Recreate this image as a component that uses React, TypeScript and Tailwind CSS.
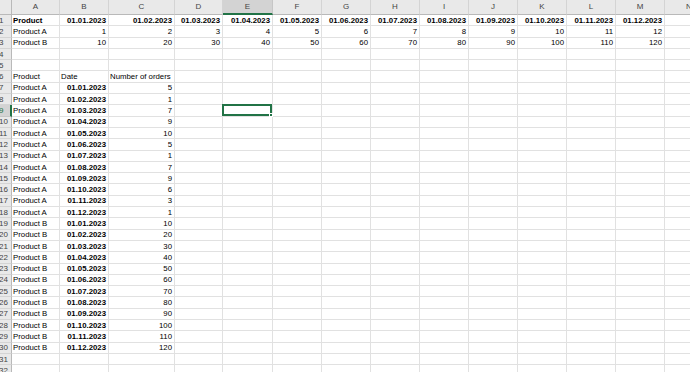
const cols = ['A', 'B', 'C', 'D', 'E', 'F', 'G', 'H', 'I', 'J', 'K', 'L', 'M', 'N'];

const months = ['01', '02', '03', '04', '05', '06', '07', '08', '09', '10', '11', '12'];
const dates = months.map((m) => `01.${m}.2023`);
const ordersA = [5, 1, 7, 9, 10, 5, 1, 7, 9, 6, 3, 1];

type Cell = { v: string; bold?: boolean; right?: boolean };
type Row = Record<string, Cell>;

function buildRows(): Row[] {
  const rows: Row[] = [];
  const r1: Row = { A: { v: 'Product', bold: true } };
  const r2: Row = { A: { v: 'Product A' } };
  const r3: Row = { A: { v: 'Product B' } };
  dates.forEach((d, i) => {
    const c = cols[i + 1];
    r1[c] = { v: d, bold: true, right: true };
    r2[c] = { v: String(i + 1), right: true };
    r3[c] = { v: String((i + 1) * 10), right: true };
  });
  rows.push(r1, r2, r3, {}, {});
  rows.push({ A: { v: 'Product' }, B: { v: 'Date' }, C: { v: 'Number of orders' } });
  dates.forEach((d, i) => {
    rows.push({
      A: { v: 'Product A' },
      B: { v: d, bold: true, right: true },
      C: { v: String(ordersA[i]), right: true },
    });
  });
  dates.forEach((d, i) => {
    rows.push({
      A: { v: 'Product B' },
      B: { v: d, bold: true, right: true },
      C: { v: String((i + 1) * 10), right: true },
    });
  });
  rows.push({}, {});
  return rows;
}

const rows = buildRows();
const SEL_COL = 'E';
const SEL_ROW = 9;

export default function App() {
  return (
    <div
      className="w-[690px] h-[372px] overflow-hidden bg-white text-black"
      style={{ fontFamily: '"Liberation Sans", Arial, sans-serif' }}
    >
      <div className="grid grid-cols-[12px_48px_49px_66px_48px_50px_repeat(8,49px)_49px] grid-rows-[15px_repeat(32,11.3px)] w-[715px]">
        {/* corner */}
        <div className="bg-[#e9e9e9] border-r border-b border-[#b9b9b9]" />
        {/* column headers */}
        {cols.map((c) => (
          <div
            key={c}
            className={
              c === SEL_COL
                ? 'flex items-center justify-center bg-[#d3d3d3] border-r border-[#c6c6c6] border-b-2 border-b-[#217346] text-[8px] text-[#444]'
                : 'flex items-center justify-center bg-[#e9e9e9] border-r border-[#d4d4d4] border-b border-b-[#b9b9b9] text-[8px] text-[#444]'
            }
          >
            {c}
          </div>
        ))}
        {/* rows */}
        {rows.map((row, ri) => {
          const n = ri + 1;
          return [
            <div
              key={`h${n}`}
              className={
                n === SEL_ROW
                  ? 'flex items-center overflow-hidden bg-[#d3d3d3] border-r-2 border-r-[#217346] border-b border-[#c6c6c6] text-[8px] leading-[11px] text-[#217346]'
                  : 'flex items-center overflow-hidden bg-[#e9e9e9] border-r border-r-[#b9b9b9] border-b border-[#d4d4d4] text-[8px] leading-[11px] text-[#444]'
              }
            >
              <span className="-ml-[1px]">{n}</span>
            </div>,
            ...cols.map((c) => {
              const cell = row[c];
              const sel = c === SEL_COL && n === SEL_ROW;
              return (
                <div
                  key={`${c}${n}`}
                  className={
                    'relative flex items-center border-r border-b border-[#e1e1e1] text-[7.8px] leading-[11px] whitespace-nowrap ' +
                    (cell?.right ? 'justify-end pr-[2px]' : 'justify-start pl-[1px]') +
                    (cell?.bold ? ' font-bold' : '')
                  }
                >
                  {cell?.v}
                  {sel && (
                    <div className="absolute -left-[1px] -top-[1px] -right-[0px] -bottom-[0px] border-2 border-[#217346]">
                      <div className="absolute -right-[3px] -bottom-[3px] w-[4px] h-[4px] bg-[#217346] border border-white" />
                    </div>
                  )}
                </div>
              );
            }),
          ];
        })}
      </div>
    </div>
  );
}
